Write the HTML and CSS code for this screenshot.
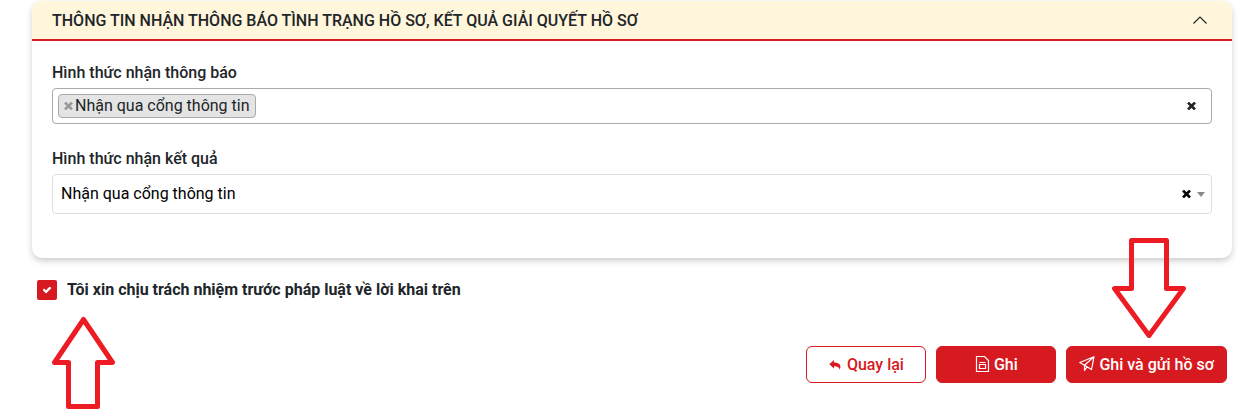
FILE: index.html
```html
<!DOCTYPE html>
<html lang="vi">
<head>
  <meta charset="UTF-8" />
  <meta name="viewport" content="width=device-width, initial-scale=1.0"/>
  <title>Nộp hồ sơ</title>
  <link rel="stylesheet" href="styles.css">
</head>
<body>

  <form class="page" onsubmit="return false">
    <section class="card">
      <header class="card-header">
        <h2>THÔNG TIN NHẬN THÔNG BÁO TÌNH TRẠNG HỒ SƠ, KẾT QUẢ GIẢI QUYẾT HỒ SƠ</h2>
        <button type="button" class="icon-button collapse" aria-label="Thu gọn">
          <svg width="16" height="10" viewBox="0 0 16 10" fill="none" stroke="currentColor" stroke-width="1.2"><path d="M1.5 7.500 8 1l6.500 6.500"/></svg>
        </button>
      </header>

      <div class="card-body">
        <div class="field">
          <label for="notifyType">Hình thức nhận thông báo</label>
          <div class="tag-box">
            <span class="tag">
              <button type="button" class="icon-button tag-remove" aria-label="Bỏ chọn">
                <svg width="9" height="8" viewBox="0 0 9 8" stroke="currentColor" stroke-width="2.6"><path d="M1 .5 8 7.500M8 .5 1 7.500"/></svg>
              </button>
              <span>Nhận qua cổng thông tin</span>
            </span>
            <input type="text" id="notifyType"/>
            <button type="button" class="icon-button" aria-label="Xóa tất cả">
              <svg width="9" height="8" viewBox="0 0 9 8" stroke="currentColor" stroke-width="2.6"><path d="M1 .5 8 7.500M8 .5 1 7.500"/></svg>
            </button>
          </div>
        </div>

        <div class="field">
          <label for="resultType">Hình thức nhận kết quả</label>
          <div class="select-box">
            <select id="resultType">
              <option>Nhận qua cổng thông tin</option>
            </select>
            <div class="select-icons">
              <button type="button" class="icon-button" aria-label="Xóa">
                <svg width="9" height="8" viewBox="0 0 9 8" stroke="currentColor" stroke-width="2.6"><path d="M1 .5 8 7.500M8 .5 1 7.500"/></svg>
              </button>
              <svg class="caret" width="8" height="5" viewBox="0 0 8 5"><path fill="#888" d="M0 0h8L4 5z"/></svg>
            </div>
          </div>
        </div>
      </div>
    </section>

    <div class="confirm">
      <input type="checkbox" id="confirm" checked/>
      <label for="confirm">Tôi xin chịu trách nhiệm trước pháp luật về lời khai trên</label>
      <svg class="arrow arrow-up" width="66" height="94" viewBox="0 0 66 94"><path d="M32.500 3.500 61.500 46.500H46.500V90.500H17.500V46.500H3.500z"/></svg>
    </div>

    <div class="actions">
      <button type="button" class="btn btn-outline">
        <svg width="12" height="10" viewBox="0 0 12 10" fill="currentColor"><path d="M5 0v2.500c4 0 6.500 1.800 6.500 4.300 0 1.100-.4 2.100-1.100 3 .2-2.400-1.500-3.600-5.400-3.600v2.300L.3 4.200z"/></svg>
        Quay lại
      </button>
      <button type="button" class="btn">
        <svg width="15" height="18" viewBox="0 0 15 18" fill="none" stroke="currentColor" stroke-width="1.2"><path d="M1.500.5h8l4 4v11h-12z"/><path d="M4.500 8.500h6v4h-6zM4.500 6.500h6"/></svg>
        Ghi
      </button>
      <button type="submit" class="btn">
        <svg width="16" height="18" viewBox="0 0 16 18" fill="none" stroke="currentColor" stroke-width="1.2" stroke-linejoin="round"><path d="M15 .8.800 6.500 5.500 9.300 12.500 13.500zM15 .8 5.500 9.300V14.500L8 10.800"/></svg>
        Ghi và gửi hồ sơ
      </button>
      <svg class="arrow arrow-down" width="74" height="100" viewBox="0 0 74 100"><path d="M19.500 2.500H54.500V50.500H71.500L37 97.500 2.500 50.500H19.500z"/></svg>
    </div>
  </form>

</body>
</html>
```
FILE: styles.css
```css
* {
  box-sizing: border-box;
}

body {
  margin: 0;
  font-family: Roboto, "Liberation Sans", sans-serif;
  font-size: 16px;
  line-height: 24px;
  color: #212529;
  background-color: #fff;
}

button, input, select {
  font: inherit;
  color: inherit;
}

svg {
  display: block;
  flex: none;
}

.page {
  padding: 1px 20px 30px 32px;
}

.card {
  border-radius: 10px;
  background-color: #fff;
  box-shadow: 0 3px 6px rgba(0, 0, 0, 0.2);
}

.card-header {
  display: flex;
  justify-content: space-between;
  align-items: center;
  padding: 8px 24px 6px 20px;
  background-color: #fff6db;
  border-bottom: 2px solid #d71920;
  border-radius: 10px 10px 0 0;
}

.card-header h2 {
  margin: 0;
  font-size: 16px;
  font-weight: 500;
}

.card-body {
  display: flex;
  flex-direction: column;
  gap: 23px;
  padding: 20px 20px 44px;
}

.field label {
  display: block;
  margin-bottom: 3px;
  font-weight: 500;
}

.icon-button {
  padding: 0;
  border: none;
  background: none;
  cursor: pointer;
}

.tag-box {
  display: flex;
  align-items: center;
  padding: 5px 15px 5px 5px;
  border: 1px solid #aaa;
  border-radius: 4px;
}

.tag-box input {
  flex: 1;
  min-width: 0;
  height: 24px;
  padding: 0;
  border: none;
  outline: none;
}

.tag {
  display: flex;
  align-items: center;
  gap: 2px;
  padding: 0 5px;
  line-height: 22px;
  border: 1px solid #aaa;
  border-radius: 4px;
  background-color: #e4e4e4;
}

.tag-remove {
  color: #999;
}

.select-box {
  position: relative;
}

.select-box select {
  display: block;
  width: 100%;
  height: 40px;
  padding: 0 48px 0 8px;
  border: 1px solid #ddd;
  border-radius: 4px;
  background-color: #fff;
  color: #000;
  appearance: none;
}

.select-icons {
  position: absolute;
  top: 0;
  bottom: 0;
  right: 7px;
  display: flex;
  align-items: center;
  gap: 6px;
  color: #000;
}

.caret {
  pointer-events: none;
}

.confirm {
  position: relative;
  display: flex;
  align-items: center;
  gap: 10px;
  margin-top: 20px;
  padding-left: 5px;
}

.confirm label {
  font-weight: 700;
}

.confirm input {
  display: grid;
  place-content: center;
  width: 20px;
  height: 20px;
  margin: 0;
  border-radius: 2px;
  background-color: #d71920;
  appearance: none;
}

.confirm input:checked::before {
  content: "";
  width: 9px;
  height: 7px;
  background-color: #fff;
  clip-path: polygon(0 50%, 18% 28%, 38% 54%, 80% 0, 100% 22%, 40% 100%);
}

.actions {
  position: relative;
  display: flex;
  justify-content: flex-end;
  gap: 10px;
  margin-top: 44px;
  padding-right: 5px;
}

.btn {
  display: flex;
  justify-content: center;
  align-items: center;
  gap: 4px;
  min-width: 120px;
  height: 37px;
  padding: 0 12px;
  border: 1px solid #d71920;
  border-radius: 6px;
  background-color: #d71920;
  color: #fff;
  font-weight: 500;
  cursor: pointer;
}

.btn-outline {
  gap: 6px;
  background-color: #fff;
  color: #d71920;
}

.arrow {
  position: absolute;
  fill: none;
  stroke: #ed1c24;
  stroke-width: 5;
  stroke-linejoin: round;
  pointer-events: none;
}

.arrow-up {
  top: 38px;
  left: 19px;
}

.arrow-down {
  bottom: 45px;
  right: 46px;
}
```
